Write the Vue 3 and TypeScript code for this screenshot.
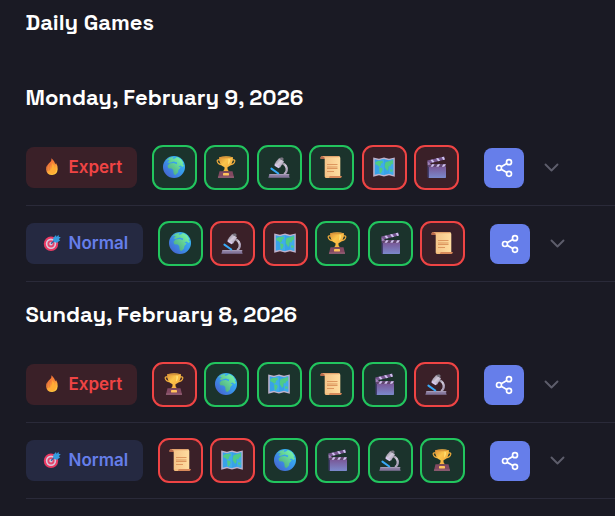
<script setup lang="ts">
    import { ref } from 'vue';

    //-----------------------------------------------------------
    type Topic = 'globe' | 'trophy' | 'microscope' | 'scroll' | 'map' | 'clapper';

    interface Answer {
        topic: Topic;
        correct: boolean;
    }

    interface Game {
        id: string;
        level: 'Expert' | 'Normal';
        answers: Answer[];
    }

    interface Day {
        date: string;
        games: Game[];
    }

    //-----------------------------------------------------------
    const days: Day[] = [
        {
            date: 'Monday, February 9, 2026',
            games: [
                {
                    id: '9-expert',
                    level: 'Expert',
                    answers: [
                        { topic: 'globe', correct: true },
                        { topic: 'trophy', correct: true },
                        { topic: 'microscope', correct: true },
                        { topic: 'scroll', correct: true },
                        { topic: 'map', correct: false },
                        { topic: 'clapper', correct: false },
                    ],
                },
                {
                    id: '9-normal',
                    level: 'Normal',
                    answers: [
                        { topic: 'globe', correct: true },
                        { topic: 'microscope', correct: false },
                        { topic: 'map', correct: false },
                        { topic: 'trophy', correct: true },
                        { topic: 'clapper', correct: true },
                        { topic: 'scroll', correct: false },
                    ],
                },
            ],
        },
        {
            date: 'Sunday, February 8, 2026',
            games: [
                {
                    id: '8-expert',
                    level: 'Expert',
                    answers: [
                        { topic: 'trophy', correct: false },
                        { topic: 'globe', correct: true },
                        { topic: 'map', correct: true },
                        { topic: 'scroll', correct: true },
                        { topic: 'clapper', correct: true },
                        { topic: 'microscope', correct: false },
                    ],
                },
                {
                    id: '8-normal',
                    level: 'Normal',
                    answers: [
                        { topic: 'scroll', correct: false },
                        { topic: 'map', correct: false },
                        { topic: 'globe', correct: true },
                        { topic: 'clapper', correct: true },
                        { topic: 'microscope', correct: true },
                        { topic: 'trophy', correct: true },
                    ],
                },
            ],
        },
    ];

    //-----------------------------------------------------------
    const opened = ref('');
    const toggle = (id: string) => {
        opened.value = opened.value === id ? '' : id;
    }
</script>

<template>
    <!-- shared icons -->
    <svg class="sprite" width="0" height="0" aria-hidden="true">
        <defs>
            <linearGradient id="sea" x1="1" y1="0" x2="0" y2="1">
                <stop offset="0" stop-color="#35c8f5" />
                <stop offset=".5" stop-color="#3994ea" />
                <stop offset="1" stop-color="#4a57c9" />
            </linearGradient>
            <linearGradient id="land" x1="1" y1="0" x2="0" y2="1">
                <stop offset="0" stop-color="#7dffb0" />
                <stop offset="1" stop-color="#459a78" />
            </linearGradient>
            <linearGradient id="gold" x1="0" y1="0" x2="1" y2="1">
                <stop offset="0" stop-color="#d98a35" />
                <stop offset=".4" stop-color="#fbc54b" />
                <stop offset="1" stop-color="#f5a338" />
            </linearGradient>
            <linearGradient id="metal" x1="0" y1="0" x2="1" y2="1">
                <stop offset="0" stop-color="#77717d" />
                <stop offset=".5" stop-color="#d2cadb" />
                <stop offset="1" stop-color="#9a8da8" />
            </linearGradient>
            <linearGradient id="paper" x1="0" y1="0" x2="1" y2="0">
                <stop offset="0" stop-color="#f1bd82" />
                <stop offset="1" stop-color="#ffdda0" />
            </linearGradient>
            <linearGradient id="slate" x1="0" y1="0" x2="0" y2="1">
                <stop offset="0" stop-color="#79518f" />
                <stop offset="1" stop-color="#7b89cc" />
            </linearGradient>
            <linearGradient id="fire" x1="0" y1="0" x2=".5" y2="1">
                <stop offset="0" stop-color="#ef5b35" />
                <stop offset=".55" stop-color="#f88b38" />
                <stop offset="1" stop-color="#ffc83f" />
            </linearGradient>
        </defs>

        <symbol id="globe" viewBox="0 0 22 22">
            <circle cx="11" cy="11" r="11" fill="url(#sea)" />
            <path d="M3 4.5 6.5 1.8 10.5 1 9.5 3 12 2.4 14 1 18 3.2 20.3 7 19.5 8 21 9.7 19.5 11 17.5 9.5 15.5 10.5 17.7 11.5 15.4 14 15 16.6 12.5 19 10.8 18.3 10.2 14 8.7 12.6 5.3 12.3 4.5 9.8 6.7 7.5 10.8 7 13.8 8.3 14.2 6.6 10.7 5.4 6.2 7 4.4 6.3 6.7 4.5 5.8 3.8Z" fill="url(#land)" />
        </symbol>

        <symbol id="trophy" viewBox="0 0 22 22">
            <path d="M6 3.8H3.2Q2 3.8 2.3 5.4 3 8.4 7 8.8M16 3.8h2.8q1.2 0 .9 1.6-.7 3-4.7 3.4" fill="none" stroke="#f1ad3c" stroke-width="1.3" />
            <path d="M4 1.2Q11-.5 18 1.2 18 9 12.5 11.2V13q.2 1.8 2 2.3h-7q1.8-.5 2-2.3v-1.8Q4 9 4 1.2Z" fill="url(#gold)" />
            <ellipse cx="11" cy="1.5" rx="6.5" ry=".8" fill="#d8953a" />
            <path d="M13.5 2.5q1.8 0 1.5 2.4-.4 2.6-2 3.8Z" fill="#ffe074" />
            <path d="M4.5 15.2h13l1.6 6.5H2.9Z" fill="#824961" />
            <path d="M3.2 20.5h15.6l.3 1.2H2.9Z" fill="#946277" />
            <rect x="8" y="17" width="6" height="2.4" rx=".4" fill="#ffc35d" />
        </symbol>

        <symbol id="microscope" viewBox="0 0 22 22">
            <path d="M13.5 6.9q6 2.1 5.2 7.6-.4 2.5-2.6 3.7" fill="none" stroke="url(#metal)" stroke-width="2.3" />
            <path d="M1.5 18.2h19l1.2 3.6H.3Z" fill="#84769b" />
            <path d="M3 18h17.5q1 0 1.1 1.3H.8Q1 18 3 18Z" fill="#a499b5" />
            <path d="m3.4 12.6 6.9 4.9" stroke="#38a9f8" stroke-width="2" stroke-linecap="round" />
            <path d="m7.9 5.7 3.3-3.6 4.8 3.2-3.9 6.1-5.4-3.2Z" fill="url(#metal)" />
            <path d="m6.8 7.6 5.3 3.3-1.6 1.3-4-2.5Z" fill="#d9caee" />
            <path d="m11.5 2 2.6-.8 1.5 1.2-.4 2.2-2.6-.8Z" fill="#77747f" />
        </symbol>

        <symbol id="scroll" viewBox="0 0 22 22">
            <path d="M2.4 0h16.4q1.5.3 1.5 2v18.2H4.7V3H1Q-.4.7 2.4 0Z" fill="url(#paper)" />
            <path d="M2.5 0Q5 .1 4.7 3H.8Q-.6.5 2.5 0Z" fill="#b8694c" />
            <path d="M2 0h16.5l1.2 1.3H3.8Q3.2.2 2 0Z" fill="#e2a36e" />
            <path d="M7 8.5h10.5M7 11h10.5M7 12.5h10.5M7 15.5h7" stroke="#d99058" stroke-width=".9" />
            <path d="M4.7 20h5.5l-.5 2h-4q-1-.4-1-2Z" fill="#f2bd7d" />
            <path d="M9.6 20h12.2q.2 1.5-1.3 2H8.7q1-.5.9-2Z" fill="#d8895a" />
        </symbol>

        <symbol id="map" viewBox="0 0 22 22">
            <path d="M.2 1.5 6 2.8l5-1.3 5 1.3 5.8-1.3v19.3L16 19.3l-5 1.3-5-1.3-5.8 1.5Z" fill="#bfb2cd" />
            <path d="M1.7 3.2 6 4.2l5-1.3 5 1.3 4.3-1v15.6L16 17.8l-5 1.3-5-1.3-4.3 1Z" fill="#38a2e8" />
            <path d="m6 4.2 5-1.3v16.2l-5-1.3Zm10 0 4.3-1v15.6l-4.3-1Z" fill="#3facea" />
            <path d="M2.3 6.2 5 5.1l4.6-.4.2 2.2-2 .8.3 1.6-1.9 1.5-1.9-1.8-2-.7Zm3.8 5 3.1.7.4 2-1.8 3.5-1.1-.6ZM11.8 8.2l1-2.2 3.2-.8 4-1.1-.1 3.9-1.9.5-.4 1.9-1.6-.4-.6 1.1.2 1.8-1.5 2.1-1.2-2.2-1.1-1.1Zm5.400 5 2.600.5-.3 2-2.400-.3Z" fill="#4fcb86" />
        </symbol>

        <symbol id="clapper" viewBox="0 0 22 22">
            <path d="M3 9h18v12.300q0 .6-.7.700H4q-.9 0-1-1Z" fill="url(#slate)" />
            <path d="M2.500 9v12.500L4 22V9Z" fill="#413c6b" />
            <path d="m2.300 4.600 17-4 .8 3L3 7.700Z" fill="#76568f" />
            <path d="m5.500 3.900 2-.5 2 2.700-2.100.5Zm5.600-1.300 2-.5 2 2.700-2 .5Zm5.600-1.300 2-.5 1.200 2.700-1.700.4Z" fill="#d0c4f0" />
            <path d="M3 8h18v3H3Z" fill="#61466f" />
            <path d="M7.200 8.200h2.300L8 10.800H5.500Zm5.600 0h2.300l-1.500 2.600h-2.400Zm5.600 0h2.400l-1.500 2.600h-2.500Z" fill="#d0c4f0" />
            <path d="m2.500 5.500 3.800 2.800-3.700 1Z" fill="#9f82b8" />
        </symbol>

        <symbol id="flame" viewBox="0 0 18 18">
            <path d="M8.500.3q3.600 3.500 3.600 6 .9-.4.700-1.800 2 3 1.900 6.800-.5 5.500-5.600 5.700-5.400 0-5.900-5.200-.2-3.300 1.300-5.300v2.200Q4.900 5.300 6.800 4.500 8.800 2.800 8.500.3Z" fill="url(#fire)" />
            <path d="M9.200 5q2.500 2.700 1.900 5.200l1.700-1.700q1.400 7.400-3.600 7.500-3.900-.4-3.300-4.200l1.300 1.300q2.700-4.500 2-8.100Z" fill="#ffac35" />
            <path d="M5.100 6.600q-1.600 3.200-.4 6.400M7.300 5.600q-1.900 3.600-1 7" fill="none" stroke="#d66a42" stroke-width=".6" />
        </symbol>

        <symbol id="target" viewBox="0 0 18 18">
            <circle cx="8" cy="9.800" r="7.200" fill="#e93a63" />
            <circle cx="8" cy="9.800" r="5.200" fill="#d8c8dd" />
            <circle cx="8" cy="9.800" r="3.600" fill="#e4446b" />
            <circle cx="8" cy="9.800" r="1.700" fill="#d8c8dd" />
            <path d="m8 9.800 5.500-5.500" stroke="#315e9d" stroke-width="1.300" />
            <path d="m10 4.300 3-3.200.6 2L15.400.8l.5 2.200 1.900.1-2 2.200 1.400.9-3.200 2.500-3.100-.8Z" fill="#359cdf" />
        </symbol>
    </svg>

    <main class="history">
        <h2 class="title">Daily Games</h2>
        <section v-for="day in days" v-bind:key="day.date" class="day">
            <h3 class="day_title">{{ day.date }}</h3>
            <div v-for="game in day.games" v-bind:key="game.id" class="game">
                <div class="level" v-bind:class="game.level.toLowerCase()">
                    <svg class="level_icon"><use v-bind:href="game.level === 'Expert' ? '#flame' : '#target'" /></svg>
                    <span class="level_text">{{ game.level }}</span>
                </div>
                <div class="answers">
                    <div v-for="answer in game.answers" v-bind:key="answer.topic" class="answer" v-bind:class="{ correct: answer.correct }">
                        <svg class="answer_icon"><use v-bind:href="'#' + answer.topic" /></svg>
                    </div>
                </div>
                <button class="share" type="button" aria-label="Share">
                    <svg width="20" height="20" viewBox="0 0 24 24" fill="none" stroke="currentColor" stroke-width="2">
                        <circle cx="18" cy="5" r="3" />
                        <circle cx="6" cy="12" r="3" />
                        <circle cx="18" cy="19" r="3" />
                        <path d="m8.600 13.500 6.800 4M15.400 6.500l-6.800 4" />
                    </svg>
                </button>
                <button v-on:click="toggle(game.id)" class="toggle" v-bind:class="{ opened: opened === game.id }" type="button" aria-label="Details">
                    <svg width="15" height="9" viewBox="0 0 15 9" fill="none" stroke="currentColor" stroke-width="1.900" stroke-linecap="round" stroke-linejoin="round">
                        <path d="m1.500 1.500 6 6 6-6" />
                    </svg>
                </button>
            </div>
        </section>
    </main>
</template>

<style>
    body {
        margin: 0;
        background-color: #1a1a24;
    }
</style>

<style scoped>
    .sprite {
        display: block;
    }

    .history {
        box-sizing: border-box;
        height: 516px;
        padding: 7px 0 0 25.5px;
        overflow: hidden;
        color: #fff;
        font-family: "Space Grotesk", Inter, sans-serif;
    }

    .title {
        margin: 0 0 42px;
        font-size: 22px;
        font-weight: 700;
        line-height: 30px;
    }

    .day_title {
        margin: 0;
        height: 51px;
        padding-top: 3px;
        box-sizing: border-box;
        font-size: 22px;
        font-weight: 600;
        line-height: 30px;
    }

    .day + .day {
        padding-top: 14px;
    }

    .game {
        display: flex;
        align-items: center;
        height: 75px;
        margin-left: 0.5px;
        border-bottom: 1px solid #2a2a39;
    }

    .level {
        display: flex;
        align-items: center;
        gap: 7.5px;
        box-sizing: border-box;
        height: 41px;
        padding: 0 0 2px 17px;
        border-radius: 8px;
        font-family: Inter, sans-serif;
        font-size: 17px;
        font-weight: 600;
    }

    .expert {
        width: 111px;
        color: #ef4444;
        background-color: rgba(239, 68, 68, .15);
    }

    .normal {
        width: 117px;
        color: #667eea;
        background-color: rgba(102, 126, 234, .15);
    }

    .level_icon {
        flex: none;
        width: 18px;
        height: 18px;
    }

    .answers {
        display: flex;
        gap: 7.4px;
        margin-left: 15px;
    }

    .answer {
        box-sizing: border-box;
        width: 45px;
        height: 45px;
        padding: 9px;
        border: 2px solid #ef4444;
        border-radius: 11px;
        background-color: rgba(239, 68, 68, .15);
    }

    .correct {
        border-color: #22c55e;
        background-color: rgba(34, 197, 94, .15);
    }

    .answer_icon {
        display: block;
        width: 22px;
        height: 22px;
    }

    .share {
        display: flex;
        align-items: center;
        justify-content: center;
        width: 40px;
        height: 40px;
        margin: 1px 0 0 25px;
        padding: 0;
        border: none;
        border-radius: 8px;
        color: #fff;
        background-color: #667eea;
        cursor: pointer;
    }

    .toggle {
        display: flex;
        margin-left: 20px;
        padding: 0;
        border: none;
        color: #5d5d6b;
        background: none;
        cursor: pointer;
    }

    .opened {
        transform: rotate(180deg);
    }
</style>
